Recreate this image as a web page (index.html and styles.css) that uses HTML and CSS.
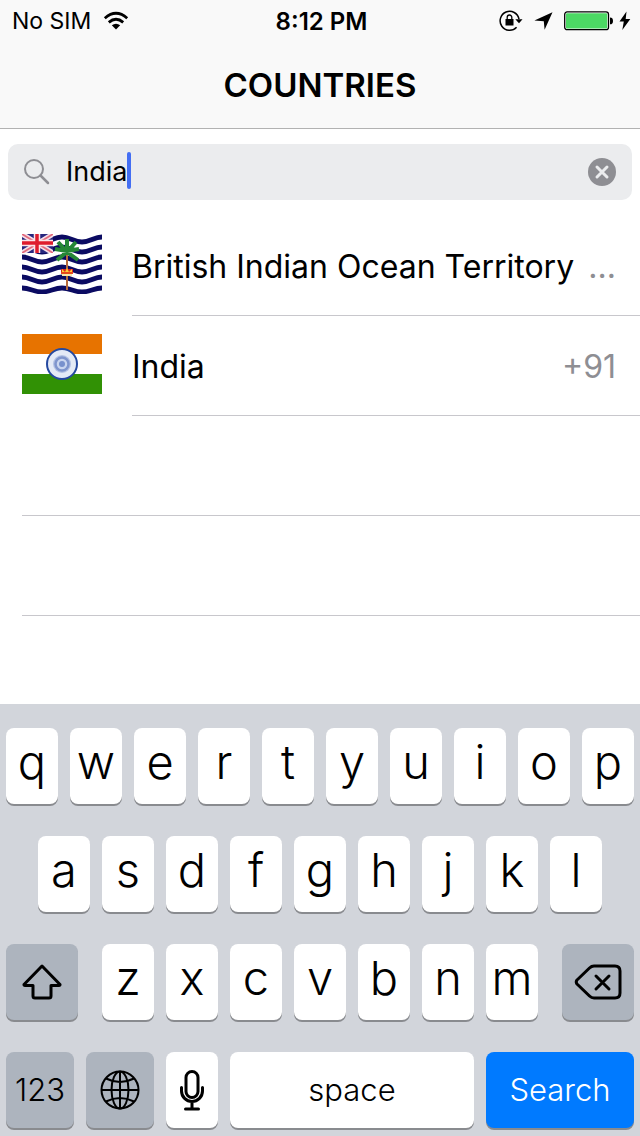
FILE: index.html
```
<!DOCTYPE html>
<html lang="en">
<head>
<meta charset="utf-8">
<meta name="viewport" content="width=device-width, initial-scale=1">
<title>Countries</title>
<link rel="stylesheet" href="styles.css">
</head>
<body>
<header class="top">
  <div class="status">
    <div class="status-left">
      <span>No SIM</span>
      <svg class="wifi" width="26" height="20" viewBox="0 0 26 20" aria-label="Wi-Fi"><g fill="none" stroke="#000" stroke-width="2.800"><path d="M1.800 7.200Q13-2.600 24.200 7.200"/><path d="M5.800 11.400Q13 5.200 20.200 11.400"/></g><path d="M8.800 14.300Q13 11 17.200 14.300L13 18.500Z"/></svg>
    </div>
    <time class="clock">8:12 PM</time>
    <div class="status-right">
      <svg width="24" height="22" viewBox="0 0 24 22" aria-label="Rotation lock"><path d="M20 9.200A9.500 9.500 0 1 0 17.600 17.300" fill="none" stroke="#000" stroke-width="1.500"/><path d="M16.300 9.300h7.200L20 13.200Z"/><rect x="6.500" y="9" width="8" height="6.500"/><path d="M8.200 9V7.300a2.300 2.300 0 0 1 4.600 0V9" fill="none" stroke="#000" stroke-width="1.300"/></svg>
      <svg class="arrow" width="19" height="18" viewBox="0 0 19 18" aria-label="Location"><path d="M18.500.3 10.600 17.800 9.800 9.300.4 8.500Z"/></svg>
      <svg class="battery" width="50" height="20" viewBox="0 0 50 20" aria-label="Battery"><rect x=".7" y=".9" width="43.800" height="17.800" rx="2.500" fill="#fff" stroke="#000" stroke-width="1.300"/><rect x="2" y="2.200" width="41.200" height="15.200" rx="1" fill="#4cd964"/><path d="M46 6.500a3 3.400 0 0 1 0 6.800Z"/></svg>
      <svg class="bolt" width="12" height="20" viewBox="0 0 12 20" aria-label="Charging"><path d="M7.500.5.500 10.500h4.300L3.300 19 11.300 8H6.700Z"/></svg>
    </div>
  </div>
  <h1 class="title">COUNTRIES</h1>
</header>

<main class="content">
  <form class="search" role="search">
    <label class="search-icon" for="query" aria-label="Search countries"><svg width="28" height="28" viewBox="0 0 28 28" fill="none" stroke="#8e8e93"><circle cx="11" cy="11" r="9" stroke-width="2"/><path d="M17.500 17.500 25 25" stroke-width="2.500" stroke-linecap="round"/></svg></label>
    <input class="query" id="query" type="text" value="India" size="5" autocomplete="off" spellcheck="false">
    <span class="caret"></span>
    <button class="clear" type="reset" aria-label="Clear"><svg width="28" height="28" viewBox="0 0 28 28"><circle cx="14" cy="14" r="14" fill="#8e8e93"/><path d="m9 9 10 10M19 9 9 19" stroke="#ebecee" stroke-width="3" stroke-linecap="round"/></svg></button>
  </form>

  <ul class="list">
    <li class="row">
      <svg class="flag" width="80" height="60" viewBox="0 0 80 60" aria-hidden="true">
        <defs><clipPath id="jack"><path d="M0 0h31v19H0Z"/></clipPath></defs>
        <path fill="#fff" d="M0 0h80v60H0Z"/>
        <g fill="none" stroke="#0b0b62" stroke-width="4.800">
          <path d="M0 3c8 0 12 5 20 5s12-5 20-5 12 5 20 5 12-5 20-5"/>
          <path d="M0 13c8 0 12 5 20 5s12-5 20-5 12 5 20 5 12-5 20-5"/>
          <path d="M0 23c8 0 12 5 20 5s12-5 20-5 12 5 20 5 12-5 20-5"/>
          <path d="M0 33c8 0 12 5 20 5s12-5 20-5 12 5 20 5 12-5 20-5"/>
          <path d="M0 43c8 0 12 5 20 5s12-5 20-5 12 5 20 5 12-5 20-5"/>
          <path d="M0 54c8 0 12 4 20 4s12-4 20-4 12 4 20 4 12-4 20-4"/>
        </g>
        <g clip-path="url(#jack)"><path fill="#26267e" d="M0 0h31v19H0Z"/><path d="m0 0 31 19M31 0 0 19" stroke="#f5dfe8" stroke-width="5"/><path d="m0 0 31 19M31 0 0 19" stroke="#e36b7d" stroke-width="1.800"/><path d="M15 0v19M0 9h31" stroke="#fbe4e8" stroke-width="6.500"/><path d="M15 0v19M0 9h31" stroke="#df1c2d" stroke-width="3.500"/></g>
        <path d="M45 20v36" stroke="#b66a3c" stroke-width="2"/>
        <g stroke="#258736" stroke-width="4" fill="none"><path d="M45 18V5M45 18 36 8M45 18l9-10M45 17l-12-2M45 17l12-2M45 18l-10 8M45 18l11 8M40 19h10"/></g>
        <path fill="#d9231e" d="M39 35h12v4H39Z"/><path fill="#fc3" d="m40 35 3 3 2-4 2 4 3-3v4H40Z"/><path fill="#e7481a" d="M39 38h12v2H39Z"/><path fill="#f7e8a8" d="M40 40h10v2H40Z"/>
      </svg>
      <div class="cell"><span class="name">British Indian Ocean Territory</span><span class="code">...</span></div>
    </li>
    <li class="row">
      <svg class="flag" width="80" height="60" viewBox="0 0 80 60" aria-hidden="true"><path fill="#e77300" d="M0 0h80v20H0Z"/><path fill="#fff" d="M0 20h80v20H0Z"/><path fill="#319105" d="M0 40h80v20H0Z"/><circle cx="40" cy="30" r="15" fill="#e4eaf6" stroke="#2549a0" stroke-width="2"/><circle cx="40" cy="30" r="9" fill="#b4c2e4"/><circle cx="40" cy="30" r="6.500" fill="#c9d5ef" stroke="#7f95cd" stroke-width="2.500"/><circle cx="40" cy="30" r="3" fill="#7891cd"/></svg>
      <div class="cell"><span class="name">India</span><span class="code">+91</span></div>
    </li>
    <li class="row blank"></li>
    <li class="row blank"></li>
  </ul>
</main>

<section class="keyboard" aria-label="Keyboard">
  <div class="keys">
    <button class="key">q</button><button class="key">w</button><button class="key">e</button><button class="key">r</button><button class="key">t</button><button class="key">y</button><button class="key">u</button><button class="key">i</button><button class="key">o</button><button class="key">p</button>
  </div>
  <div class="keys keys-home">
    <button class="key">a</button><button class="key">s</button><button class="key">d</button><button class="key">f</button><button class="key">g</button><button class="key">h</button><button class="key">j</button><button class="key">k</button><button class="key">l</button>
  </div>
  <div class="keys keys-lower">
    <button class="key dark icon" aria-label="Shift"><svg width="40" height="36" viewBox="0 0 40 36" fill="none" stroke="#000" stroke-width="3" stroke-linejoin="round"><path d="M20 2 2 20.500Q1.800 21.500 3 21.500H11V32Q11 34 13 34H27Q29 34 29 32V21.500H37Q38.200 21.500 38 20.500Z"/></svg></button>
    <div class="letters"><button class="key">z</button><button class="key">x</button><button class="key">c</button><button class="key">v</button><button class="key">b</button><button class="key">n</button><button class="key">m</button></div>
    <button class="key dark icon" aria-label="Delete"><svg width="48" height="36" viewBox="0 0 48 36" fill="none" stroke="#000" stroke-width="3" stroke-linecap="round" stroke-linejoin="round"><path d="M20 2H41Q46 2 46 7V29Q46 34 41 34H20Q17.500 34 15.500 32L3 20Q1.500 18 3 16L15.500 4Q17.500 2 20 2Z"/><path d="m22 12 13 13M35 12 22 25"/></svg></button>
  </div>
  <div class="keys keys-bottom">
    <button class="key dark word">123</button>
    <button class="key dark icon" aria-label="Next keyboard"><svg width="40" height="40" viewBox="0 0 40 40" fill="none" stroke="#000" stroke-width="2"><circle cx="20" cy="20" r="18.500"/><ellipse cx="20" cy="20" rx="8.500" ry="18.500"/><path d="M20 1v38M1 20h38M6 8.500Q20 15.500 34 8.500M6 31.500Q20 24.500 34 31.500"/></svg></button>
    <button class="key icon" aria-label="Dictate"><svg width="26" height="42" viewBox="0 0 26 42" fill="none" stroke="#000" stroke-width="3" stroke-linecap="round"><rect x="7" y="2.500" width="12" height="26" rx="6"/><path d="M2.500 18.500V22a10.500 10.500 0 0 0 21 0v-3.500M13 33v6M6.500 40h13"/></svg></button>
    <button class="key word">space</button>
    <button class="key word go">Search</button>
  </div>
</section>
</body>
</html>
```
FILE: styles.css
```
*, *::after { box-sizing: border-box; }

body {
  margin: 0;
  min-height: 100vh;
  display: flex;
  flex-direction: column;
  background: #fff;
  color: #000;
  font-family: Inter, "Liberation Sans", sans-serif;
}

svg { display: block; flex: none; }
button, input { font: inherit; color: inherit; border: 0; padding: 0; margin: 0; }

.top {
  background: #f9f9f9;
  border-bottom: 1px solid #b2b2b2;
}

.status {
  display: grid;
  grid-template-columns: 1fr auto 1fr;
  align-items: center;
  height: 42px;
  padding: 0 9px 0 12px;
  font-size: 23px;
}
.status-left { display: flex; align-items: center; gap: 12px; }
.status-right { display: flex; align-items: center; justify-content: flex-end; }
.clock { font-size: 24px; font-weight: 600; }
.arrow { margin-left: 11px; }
.battery { margin-left: 11px; }
.bolt { margin-left: 5px; }

.title {
  margin: 0;
  height: 86px;
  line-height: 86px;
  text-align: center;
  font-size: 33px;
  font-weight: 600;
}

.content { flex: 1; }

.search {
  display: flex;
  align-items: center;
  height: 56px;
  margin: 15px 8px 16px;
  padding: 0 16px 0 15px;
  background: #ebecee;
  border-radius: 10px;
}
.search-icon { margin-right: 15px; }
.query {
  width: 61px;
  field-sizing: content;
  background: none;
  outline: none;
  font-size: 27px;
  line-height: 36px;
}
.caret {
  width: 4px;
  height: 37px;
  margin-bottom: 3px;
  border-radius: 2px;
  background: #436ef3;
}
.clear { margin-left: auto; background: none; border-radius: 50%; }

.list { list-style: none; margin: 0; padding: 0; }
.row {
  display: flex;
  align-items: center;
  height: 100px;
  padding-left: 22px;
}
.flag { margin: 0 30px 4px 0; }
.cell {
  flex: 1;
  min-width: 0;
  height: 100%;
  display: flex;
  align-items: center;
  justify-content: space-between;
  padding: 2px 24px 0 0;
  border-bottom: 1px solid #c8c7cc;
  font-size: 32px;
  white-space: nowrap;
}
.code { color: #8e8e93; }
.blank::after {
  content: "";
  flex: 1;
  height: 100%;
  border-bottom: 1px solid #c8c7cc;
}

.keyboard {
  display: flex;
  flex-direction: column;
  gap: 32px;
  padding: 24px 6px 8px;
  background: #d2d5db;
}
.keys { display: flex; gap: 12px; }
.keys-home { padding: 0 32px; }
.keys-lower { gap: 24px; }
.letters { flex: 436; display: flex; gap: 12px; }
.keys-lower > .key { flex: 72; }

.key {
  flex: 1 1 0;
  min-width: 0;
  height: 76px;
  padding-bottom: 8px;
  border-radius: 8px;
  background: #fff;
  box-shadow: 0 2px 0 #898b8f;
  font-size: 47px;
  font-weight: 300;
  line-height: 68px;
  text-align: center;
}
.dark { background: #adb4be; }
.icon {
  display: flex;
  align-items: center;
  justify-content: center;
  padding: 0;
}
.word { font-size: 31px; padding: 0; }

.keys-bottom {
  display: grid;
  grid-template-columns: 68fr 68fr 52fr 244fr 148fr;
}
.go { background: #007aff; color: #fff; }
```
